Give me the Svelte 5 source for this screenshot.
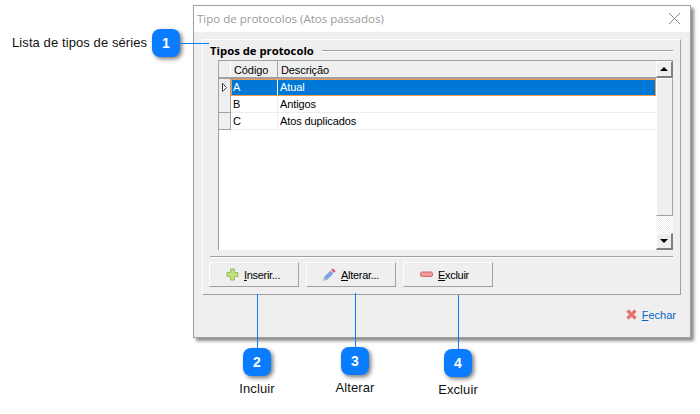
<script lang="ts">
	const rows = [
		{ code: 'A', desc: 'Atual' },
		{ code: 'B', desc: 'Antigos' },
		{ code: 'C', desc: 'Atos duplicados' }
	];
	const selected = 0;

	const notes = [
		{ n: 2, label: 'Incluir', cls: 'n2' },
		{ n: 3, label: 'Alterar', cls: 'n3' },
		{ n: 4, label: 'Excluir', cls: 'n4' }
	];
</script>

<div class="page">
	<div class="window">
		<header class="titlebar">
			<span>Tipo de protocolos (Atos passados)</span>
			<svg class="close" width="13" height="13" viewBox="0 0 13 13">
				<path d="M1 1 L12 12 M12 1 L1 12" stroke="#8a8a8a" stroke-width="1" fill="none" />
			</svg>
		</header>

		<div class="body">
			<section class="group">
				<div class="legend">
					<b>Tipos de protocolo</b>
					<i></i>
				</div>

				<div class="grid">
					<div class="table">
						<div class="row head">
							<div class="ind"></div>
							<div class="code">Código</div>
							<div class="desc">Descrição</div>
						</div>
						{#each rows as r, i}
							<div class="row" class:sel={i === selected}>
								<div class="ind">
									{#if i === selected}
										<svg width="7" height="9" viewBox="0 0 7 9">
											<path d="M1.5 .5 L5.5 4.5 L1.5 8.5 Z" fill="#fff" stroke="#000" stroke-dasharray="1.5 .5" />
										</svg>
									{/if}
								</div>
								<div class="code">{r.code}</div>
								<div class="desc">{r.desc}</div>
							</div>
						{/each}
					</div>
					<div class="scroll">
						<button class="arrow" aria-label="up"><span class="up"></span></button>
						<div class="thumb"></div>
						<div class="track"></div>
						<button class="arrow" aria-label="down"><span class="down"></span></button>
					</div>
				</div>

				<div class="actions">
					<button class="btn">
						<svg width="13" height="13" viewBox="0 0 13 13">
							<path d="M4.5 1 H8.5 V4.5 H12 V8.5 H8.5 V12 H4.5 V8.5 H1 V4.5 H4.5 Z" fill="#bfe27c" stroke="#9cbc62" />
						</svg>
						<span><u>I</u>nserir...</span>
					</button>
					<button class="btn">
						<svg width="13" height="13" viewBox="0 0 13 13">
							<path d="M.5 12.5 L1 9 L7.5 2.5 L10.5 5.5 L4 12 Z" fill="#7aa5de" />
							<path d="M.5 12.5 L1 9 L4 12 Z" fill="#bdbdbd" />
							<path d="M8.2 1.8 L9.8 .4 L12.6 3.2 L11.2 4.8 Z" fill="#dc4a52" />
						</svg>
						<span><u>A</u>lterar...</span>
					</button>
					<button class="btn">
						<svg width="13" height="13" viewBox="0 0 13 13">
							<rect x=".5" y="4" width="12" height="4.5" rx="1.5" fill="#f09a9a" stroke="#d06a70" />
						</svg>
						<span><u>E</u>xcluir</span>
					</button>
				</div>
			</section>

			<footer class="foot">
				<svg width="13" height="13" viewBox="0 0 13 13">
					<path d="M2.5 2.5 L10.5 10.5 M10.5 2.5 L2.5 10.5" stroke="#e77272" stroke-width="3.2" />
				</svg>
				<span class="fechar"><u>F</u>echar</span>
			</footer>
		</div>
	</div>

	<span class="lead">Lista de tipos de séries</span>
	<div class="badge b1">1</div>
	<div class="line h1"></div>

	{#each notes as note}
		<div class="note {note.cls}">
			<div class="vline"></div>
			<div class="badge">{note.n}</div>
			<span>{note.label}</span>
		</div>
	{/each}
</div>

<style>
	:global(body) {
		margin: 0;
		background: #fff;
	}

	.page {
		position: relative;
		width: 700px;
		height: 414px;
		overflow: hidden;
		font-family: 'Liberation Sans', Arial, sans-serif;
		padding: 5px 0 0 193px;
		box-sizing: border-box;
	}

	.window {
		width: 498px;
		height: 333px;
		box-sizing: border-box;
		border: 1px solid #a0a0a0;
		background: #efefef;
		box-shadow: 3px 3px 3px #8c8c8c;
		display: flex;
		flex-direction: column;
	}

	.titlebar {
		height: 26px;
		flex: none;
		box-sizing: border-box;
		background: #fff;
		display: flex;
		align-items: center;
		justify-content: space-between;
		padding: 0 9px 2px 3px;
		color: #9a9a9a;
		font: 11.5px 'Open Sans', sans-serif;
	}

	.body {
		flex: 1;
		display: flex;
		flex-direction: column;
		padding: 7px 9px 0 8px;
	}

	.group {
		height: 256px;
		box-sizing: border-box;
		border: 1px solid;
		border-color: #fff #a0a0a0 #a0a0a0 #fff;
		padding: 0 7px 0 7px;
		display: flex;
		flex-direction: column;
	}

	.legend {
		height: 20px;
		display: flex;
		align-items: center;
		gap: 8px;
		color: #000;
	}

	.legend b {
		font: bold 11.3px 'Open Sans', sans-serif;
	}

	.legend i {
		flex: 1;
		height: 1px;
		background: #a0a0a0;
		box-shadow: 0 1px 0 #fff;
	}

	.grid {
		margin-left: 8px;
		height: 190px;
		box-sizing: border-box;
		border: 1px solid #a0a0a0;
		border-right: 0;
		border-bottom: 0;
		background: #fff;
		display: flex;
		font-size: 11px;
		letter-spacing: -0.1px;
	}

	.table {
		flex: 1;
	}

	.row {
		display: flex;
		height: 17px;
		line-height: 16px;
		color: #000;
		box-sizing: border-box;
		border-bottom: 1px solid #ececec;
	}

	.row.head {
		height: 18px;
		line-height: 18px;
		background: #efefef;
		border-bottom: 2px solid #a0a0a0;
	}

	.ind {
		width: 11px;
		flex: none;
		background: #efefef;
		border-right: 1px solid #a0a0a0;
		border-bottom: 1px solid #a0a0a0;
		margin-bottom: -1px;
		display: flex;
		align-items: center;
		justify-content: center;
	}

	.head .ind {
		border-bottom: 0;
		margin-bottom: 0;
		border-right: 1px solid #fff;
	}

	.code {
		width: 47px;
		flex: none;
		padding-left: 2px;
		box-sizing: border-box;
		border-right: 1px solid #ececec;
	}

	.desc {
		flex: 1;
		padding-left: 2px;
	}

	.head .code,
	.head .desc {
		padding-left: 3px;
	}

	.head .code {
		border-right: 1px solid #a0a0a0;
	}

	.sel .code,
	.sel .desc {
		background: #0078d7;
		color: #fff;
		border-top: 1px solid #f09a4a;
		border-bottom: 1px solid #f09a4a;
		line-height: 14px;
	}

	.sel .code {
		border-right: 1px solid #fff;
		border-left: 1px solid #f09a4a;
		padding-left: 1px;
	}

	.sel .desc {
		border-right: 1px solid #f09a4a;
	}

	.row.sel {
		border-bottom: 0;
	}

	.scroll {
		width: 17px;
		flex: none;
		display: flex;
		flex-direction: column;
		background: #fff;
	}

	.arrow {
		width: 17px;
		height: 17px;
		padding: 0;
		flex: none;
		box-sizing: border-box;
		background: #efefef;
		border-style: solid;
		border-width: 1px 2px 2px 1px;
		border-color: #fff #808080 #808080 #fff;
		display: flex;
		align-items: center;
		justify-content: center;
	}

	.up,
	.down {
		width: 0;
		height: 0;
		border-left: 4px solid transparent;
		border-right: 4px solid transparent;
	}

	.up {
		border-bottom: 4px solid #000;
	}

	.down {
		border-top: 4px solid #000;
	}

	.thumb {
		height: 138px;
		flex: none;
		box-sizing: border-box;
		background: #efefef;
		border: 1px solid;
		border-color: #fff #a0a0a0 #a0a0a0 #fff;
	}

	.track {
		flex: 1;
		background: repeating-conic-gradient(#eee 0 25%, #fff 0 50%) 0 0 / 2px 2px;
	}

	.actions {
		margin-top: 6px;
		padding-top: 5px;
		border-top: 1px solid #a0a0a0;
		box-shadow: inset 0 1px 0 #fff;
		display: flex;
		gap: 7px;
	}

	.btn {
		width: 90px;
		height: 25px;
		box-sizing: border-box;
		background: #efefef;
		border: 1px solid;
		border-color: #fff #a0a0a0 #a0a0a0 #fff;
		font: inherit;
		font-size: 11px;
		letter-spacing: -0.3px;
		color: #000;
		display: flex;
		align-items: center;
		gap: 5px;
		padding: 0 0 0 16px;
	}

	.btn:first-child {
		margin-left: -1px;
	}

	.foot {
		flex: 1;
		display: flex;
		align-items: center;
		justify-content: flex-end;
		gap: 4px;
		padding: 0 5px 3px 0;
	}

	.fechar {
		font-size: 11px;
		color: #0a64c8;
	}

	.badge {
		width: 28px;
		height: 28px;
		border-radius: 8px;
		background: #0a7cff;
		color: #fff;
		font: bold 14px 'Liberation Sans', sans-serif;
		display: flex;
		align-items: center;
		justify-content: center;
		box-shadow: 2px 2px 4px #777;
	}

	.lead {
		position: absolute;
		left: 12px;
		top: 35px;
		font-size: 13px;
		letter-spacing: 0.09px;
		color: #111;
	}

	.b1 {
		position: absolute;
		left: 152px;
		top: 29px;
	}

	.h1 {
		position: absolute;
		left: 180px;
		top: 43px;
		width: 29px;
		height: 1px;
		background: #0a7cff;
	}

	.note {
		position: absolute;
		width: 60px;
		display: flex;
		flex-direction: column;
		align-items: center;
		font-size: 13px;
		letter-spacing: 0.1px;
		color: #111;
	}

	.vline {
		width: 1px;
		height: 54px;
		background: #0a7cff;
	}

	.note span {
		margin-top: 5px;
	}

	.n2 {
		left: 227px;
		top: 294px;
	}

	.n3 {
		left: 325px;
		top: 293px;
	}

	.n4 {
		left: 428px;
		top: 295px;
	}
</style>
